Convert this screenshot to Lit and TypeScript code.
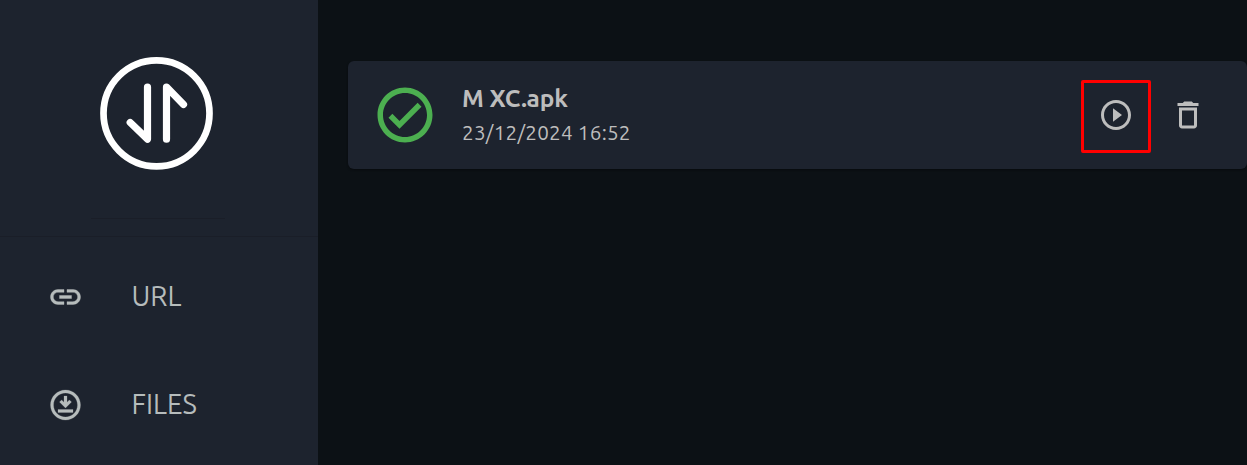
import { LitElement, html, css, svg } from "lit";
import { customElement } from "lit/decorators.js";

const icons = {
  link: svg`<path stroke="currentColor" stroke-width=".25" d="M3.900 12c0-1.710 1.390-3.100 3.100-3.100h4V7H7c-2.760 0-5 2.240-5 5s2.240 5 5 5h4v-1.900H7c-1.710 0-3.100-1.390-3.100-3.100zM8 13h8v-2H8v2zm9-6h-4v1.900h4c1.710 0 3.100 1.390 3.100 3.100s-1.390 3.100-3.100 3.100h-4V17h4c2.760 0 5-2.240 5-5s-2.240-5-5-5z"/>`,
  files: svg`<path stroke="currentColor" stroke-width=".15" d="M12 4c4.410 0 8 3.590 8 8s-3.590 8-8 8-8-3.590-8-8 3.590-8 8-8m0-2C6.480 2 2 6.480 2 12s4.480 10 10 10 10-4.480 10-10S17.520 2 12 2zM14.590 8.590L13 10.170V6h-2v4.170L9.410 8.590 8 10l4 4 4-4zM17 17H7v-2h10z"/>`,
  done: svg`<path d="M16.590 7.580L10 14.170l-2.590-2.580L6 13l4 4 8-8zM12 2C6.480 2 2 6.480 2 12s4.480 10 10 10 10-4.480 10-10S17.520 2 12 2zm0 18c-4.420 0-8-3.580-8-8s3.580-8 8-8 8 3.580 8 8-3.580 8-8 8z"/>`,
  play: svg`<path d="M10 16.500l6-4.500-6-4.500zM12 2C6.480 2 2 6.480 2 12s4.480 10 10 10 10-4.480 10-10S17.520 2 12 2zm0 18c-4.410 0-8-3.590-8-8s3.590-8 8-8 8 3.590 8 8-3.590 8-8 8z"/>`,
  trash: svg`<path d="M6 19c0 1.100.900 2 2 2h8c1.100 0 2-.900 2-2V7H6zM8 9h8v10H8zm7.500-5l-1-1h-5l-1 1H5v2h14V4z"/>`,
};

@customElement("app-root")
export class AppRoot extends LitElement {
  static styles = css`
    :host {
      display: flex;
      height: 465px;
      overflow: hidden;
      background: #0c1115;
      color: #bdbdbd;
      font-family: Ubuntu, "Noto Sans", sans-serif;
    }
    * { box-sizing: border-box; }
    svg { display: block; flex: none; fill: currentColor; }
    .side {
      width: 318px;
      flex: none;
      background: #1d232e;
      color: #b6bcbc;
    }
    .brand {
      height: 237px;
      padding-top: 53px;
      padding-right: 6px;
      border-bottom: 1px solid #1a1e28;
      display: flex;
      flex-direction: column;
      align-items: center;
    }
    .logo { fill: none; stroke: #fff; }
    .rule { width: 134px; height: 1px; margin: 45px 0 0 4px; background: #1a1e28; }
    .item {
      height: 108px;
      display: flex;
      align-items: center;
      padding-left: 47px;
      font-size: 27.500px;
      line-height: 36px;
    }
    .item:first-child { margin-top: 6px; }
    .label { margin-left: 47.500px; padding-bottom: 2px; white-space: nowrap; }
    .main { flex: 1; min-width: 0; padding: 61px 0 0 30px; }
    .card {
      height: 108px;
      border-radius: 6px;
      background: #1d232e;
      box-shadow: 0 1px 2px #080b0e;
      display: flex;
      align-items: center;
      padding: 0 5px 0 24px;
    }
    .done { color: #4caf50; }
    .info { margin-left: 24px; flex: 1; white-space: nowrap; }
    .title { margin-bottom: 1px; font-size: 24.500px; line-height: 34px; font-weight: 700; letter-spacing: -0.050px; }
    .date { font-size: 20.700px; line-height: 34px; letter-spacing: 0.230px; }
    .play {
      width: 70px;
      height: 73px;
      margin-top: 3px;
      padding: 14px 0 0 14px;
      border: 3px solid #ff0000;
      border-radius: 2px;
    }
    .trash { width: 91px; padding-left: 19px; }
  `;

  icon(name: keyof typeof icons, width = 36, height = width) {
    return html`<svg width=${width} height=${height} viewBox="0 0 24 24">${icons[name]}</svg>`;
  }

  render() {
    return html`
      <aside class="side">
        <div class="brand">
          <svg class="logo" width="120" height="120" viewBox="0 0 120 120">
            <circle cx="60.500" cy="60.300" r="53" stroke-width="6.700" />
            <path d="M34.200 69.500L51.500 86.200V34M70.500 86.200V34L87.500 51.500" stroke-width="7.200" stroke-linecap="round" stroke-linejoin="round" />
          </svg>
          <div class="rule"></div>
        </div>
        <nav>
          <div class="item">${this.icon("link", 37, 36)}<span class="label">URL</span></div>
          <div class="item">${this.icon("files", 37, 36)}<span class="label">FILES</span></div>
        </nav>
      </aside>
      <main class="main">
        <section class="card">
          <div class="done">${this.icon("done", 66)}</div>
          <div class="info">
            <div class="title">M XC.apk</div>
            <div class="date">23/12/2024 16:52</div>
          </div>
          <div class="play">${this.icon("play")}</div>
          <div class="trash">${this.icon("trash")}</div>
        </section>
      </main>
    `;
  }
}
